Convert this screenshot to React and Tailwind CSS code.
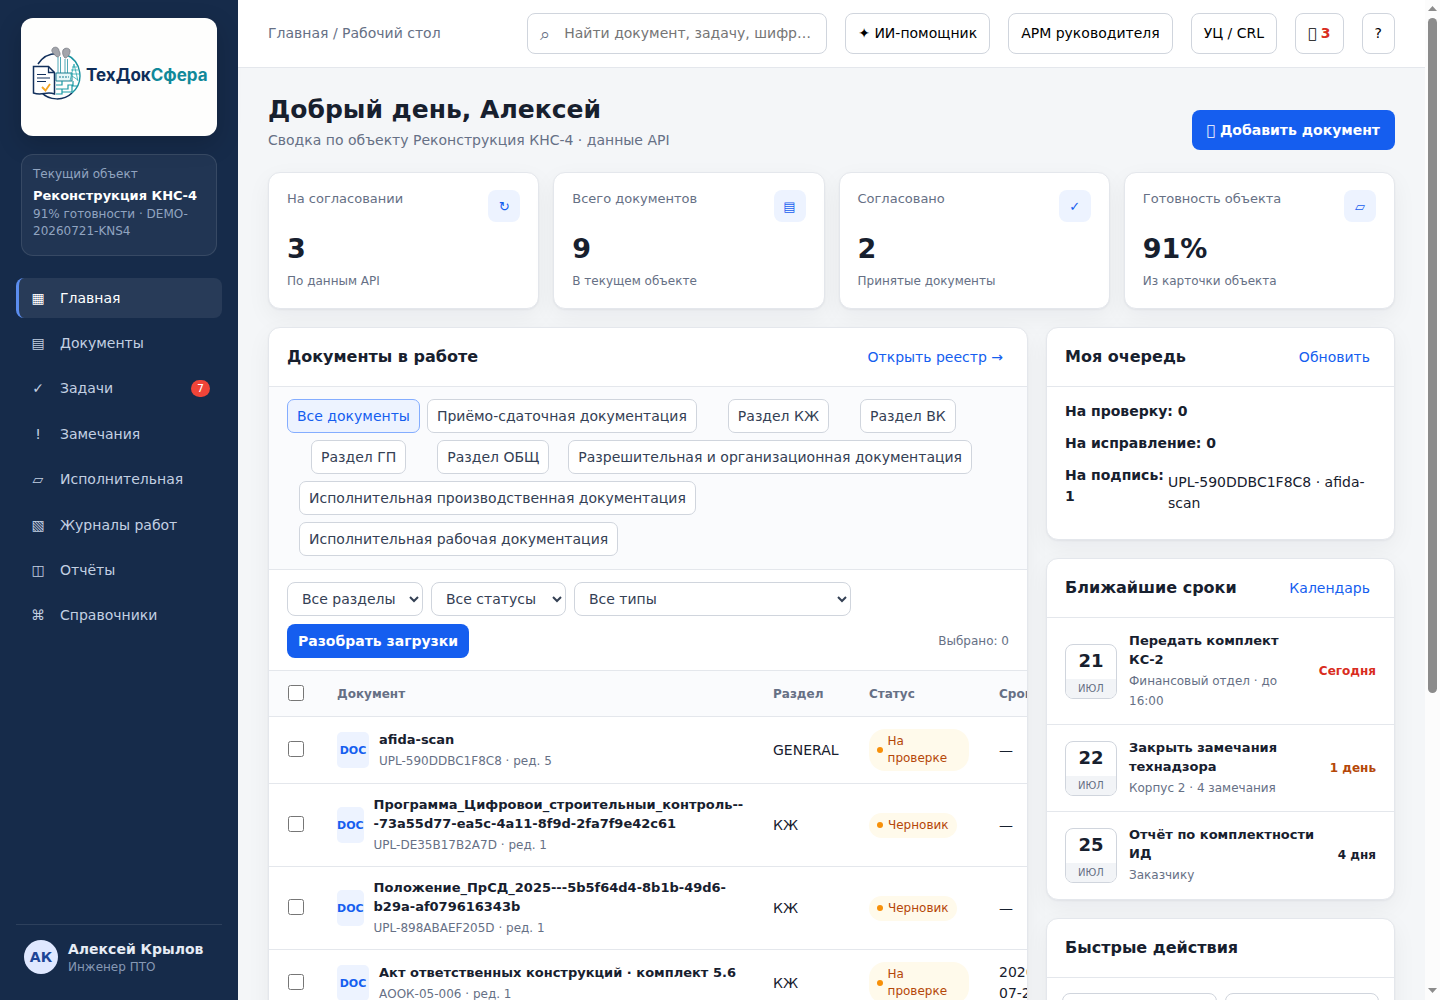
import React from 'react'

const navItems = [
  { icon: '▦', label: 'Главная', active: true },
  { icon: '▤', label: 'Документы' },
  { icon: '✓', label: 'Задачи', badge: 7 },
  { icon: '!', label: 'Замечания' },
  { icon: '▱', label: 'Исполнительная' },
  { icon: '▧', label: 'Журналы работ' },
  { icon: '◫', label: 'Отчёты' },
  { icon: '⌘', label: 'Справочники' },
]

const stats = [
  { label: 'На согласовании', icon: '↻', value: '3', note: 'По данным API' },
  { label: 'Всего документов', icon: '▤', value: '9', note: 'В текущем объекте' },
  { label: 'Согласовано', icon: '✓', value: '2', note: 'Принятые документы' },
  { label: 'Готовность объекта', icon: '▱', value: '91%', note: 'Из карточки объекта' },
]

const chips = [
  { label: 'Все документы', level: 0, active: true },
  { label: 'Приёмо-сдаточная документация', level: 0 },
  { label: 'Раздел КЖ', level: 2 },
  { label: 'Раздел ВК', level: 2 },
  { label: 'Раздел ГП', level: 2 },
  { label: 'Раздел ОБЩ', level: 2 },
  { label: 'Разрешительная и организационная документация', level: 1 },
  { label: 'Исполнительная производственная документация', level: 1 },
  { label: 'Исполнительная рабочая документация', level: 1 },
]

const chipIndent = ['', 'ml-3', 'ml-6']

const documents = [
  { name: 'afida-scan', code: 'UPL-590DDBC1F8C8 · ред. 5', section: 'GENERAL', status: 'На проверке', due: '—' },
  {
    name: 'Программа_Цифровои_строительныи_контроль---73a55d77-ea5c-4a11-8f9d-2fa7f9e42c61',
    code: 'UPL-DE35B17B2A7D · ред. 1',
    section: 'КЖ',
    status: 'Черновик',
    due: '—',
  },
  {
    name: 'Положение_ПрСД_2025---5b5f64d4-8b1b-49d6-b29a-af079616343b',
    code: 'UPL-898ABAEF205D · ред. 1',
    section: 'КЖ',
    status: 'Черновик',
    due: '—',
  },
  { name: 'Акт ответственных конструкций · комплект 5.6', code: 'АООК-05-006 · ред. 1', section: 'КЖ', status: 'На проверке', due: '2026-07-21' },
]

const deadlines = [
  { day: 21, title: 'Передать комплект КС-2', note: 'Финансовый отдел · до 16:00', left: 'Сегодня', tone: 'text-[#d92d20]' },
  { day: 22, title: 'Закрыть замечания технадзора', note: 'Корпус 2 · 4 замечания', left: '1 день', tone: 'text-[#b54708]' },
  { day: 25, title: 'Отчёт по комплектности ИД', note: 'Заказчику', left: '4 дня', tone: 'text-[#17202e]' },
]

const topButton = 'h-[41px] shrink-0 rounded-lg border border-[#d0d5dd] bg-white px-3 whitespace-nowrap text-black'
const card = 'rounded-xl border border-[#e4e7ec] bg-white shadow-[0_1px_2px_rgba(16,24,40,0.05),0_8px_24px_rgba(16,24,40,0.05)]'

const LogoMark = () => (
  <svg viewBox="0 0 50 54" className="h-[54px] w-[50px] shrink-0" fill="none" aria-hidden="true">
    <path d="M6 18A23 23 0 0 1 25 7.500" stroke="#12305c" strokeWidth="1.500" />
    <path d="M9 46C17 55 32 55 40 47" stroke="#12305c" strokeWidth="1.500" />
    <path d="M34 8.500A23 23 0 0 1 40 47" stroke="#1a93a0" strokeWidth="1.400" />
    <g fill="#a3a5ab" stroke="#777b84" strokeWidth="0.800">
      <path d="M21 2c3-2 6 0 6 3 2 3 1 5-1 6-3 0-3-3-5-4-2-2-1-4 0-5z" />
      <path d="M31 4c2-3 7-2 7 1 0 4-3 7-5 7-2-2-3-5-2-8z" />
    </g>
    <path d="M26 11v16M28.500 11v16M33 13v14M35.500 13v14" stroke="#3d9fae" strokeWidth="0.900" />
    <path d="M24 27h16v8H24z" fill="#e6f7f8" stroke="#197f91" />
    <path d="M27 31h10" stroke="#197f91" strokeWidth="1.200" strokeDasharray="2 1" />
    <path d="M30 35v4h-6M24 43h12v-4h5v-4M24 48h6v-5M30 46h10v-6h6" stroke="#1a9aa5" strokeWidth="1.200" />
    <path d="M38 35l4-17 4 17M39 24h7M38 28h9M40 21h5M40 30l6 4" stroke="#29a9b0" strokeWidth="0.800" />
    <path d="M1.500 20.500h15l6 6V48c-8-3-12 2-21-1z" fill="#fff" stroke="#12305c" strokeWidth="1.500" />
    <path d="M16.500 20.500v6h6" stroke="#12305c" strokeWidth="1.300" />
    <path d="M5 28.500h9M5 32h13M5 35.500h9" stroke="#12305c" strokeWidth="1.200" />
    <path d="M10 41l3.500 3.500L18 38" stroke="#f5a623" strokeWidth="1.800" />
  </svg>
)

const Sidebar = () => (
  <aside className="flex w-[238px] shrink-0 flex-col bg-[#162b4a] px-4 pt-[18px] pb-[25px]">
    <div className="mx-[5px] flex h-[118px] items-center rounded-xl bg-[#fefefd] pb-2 pl-[11px] shadow-[0_8px_24px_rgba(0,0,0,0.18)]">
      <LogoMark />
      <span className="mt-1 ml-1 font-['Inter',sans-serif] text-[17px] leading-6 font-bold text-[#0f2d59]">
        ТехДок<span className="text-[#11899a]">Сфера</span>
      </span>
    </div>

    <div className="mx-[5px] mt-[18px] h-[102px] rounded-xl border border-white/10 bg-white/5 px-[11px] pt-[11px] text-xs leading-[17px] text-[#91a4c0]">
      <div>Текущий объект</div>
      <div className="mt-[3px] text-[13px] leading-5 font-bold whitespace-nowrap text-white">Реконструкция КНС-4</div>
      <div>91% готовности · DEMO-20260721-KNS4</div>
    </div>

    <nav className="mt-[22px] flex h-[358px] flex-col justify-between">
      {navItems.map((item) => (
        <a
          key={item.label}
          href="#"
          className={
            item.active
              ? 'flex h-10 items-center gap-3 rounded-lg border-l-[3px] border-[#5b8def] bg-white/8 pr-3 pl-[9px] text-white'
              : 'flex h-10 items-center gap-3 rounded-lg pr-3 pl-3 text-[#c3d0e2]'
          }
        >
          <span className="w-5 text-center">{item.icon}</span>
          <span className="grow">{item.label}</span>
          {item.badge && (
            <span className="rounded-full bg-[#f04438] px-[6px] text-[11px] leading-[17px] text-white">{item.badge}</span>
          )}
        </a>
      ))}
    </nav>

    <div className="mt-auto flex items-center gap-[10px] border-t border-white/10 px-2 pt-[14px]">
      <div className="flex h-[34px] w-[34px] items-center justify-center rounded-full bg-[#dfe8ff] font-bold text-[#1d4596]">АК</div>
      <div>
        <div className="leading-5 font-bold text-[#e6ecf5]">Алексей Крылов</div>
        <div className="text-xs leading-4 text-[#8698b4]">Инженер ПТО</div>
      </div>
    </div>
  </aside>
)

const TopBar = () => (
  <header className="flex h-[68px] shrink-0 items-center gap-[18px] border-b border-[#e4e7ec] bg-white px-[30px]">
    <div className="grow text-[#667085]">Главная / Рабочий стол</div>
    <label className="flex h-[41px] w-[300px] items-center rounded-lg border border-[#d0d5dd] px-3 text-[#667085]">
      <span className="w-6 shrink-0 text-lg">⌕</span>
      <input
        type="text"
        aria-label="Поиск"
        placeholder="Найти документ, задачу, шифр…"
        className="w-full min-w-0 text-ellipsis outline-none placeholder:text-[#757575]"
      />
    </label>
    <button className={topButton}>✦ ИИ-помощник</button>
    <button className={topButton}>АРМ руководителя</button>
    <button className={topButton}>УЦ / CRL</button>
    <button className={topButton} aria-label="Уведомления">
      {'\uf0f3'} <b className="text-[#d92d20]">3</b>
    </button>
    <button className={topButton}>?</button>
  </header>
)

const PanelHeader = ({ title, action }) => (
  <div className="flex h-[59px] items-center justify-between border-b border-[#e4e7ec] pr-6 pl-[18px]">
    <h2 className="text-base leading-6 font-bold">{title}</h2>
    {action && <button className="text-[#155eef]">{action}</button>}
  </div>
)

const StatCard = ({ label, icon, value, note }) => (
  <div className={`${card} px-[18px] py-[17px]`}>
    <div className="flex items-start justify-between">
      <span className="text-[13px] leading-[18px] text-[#667085]">{label}</span>
      <span className="flex h-8 w-8 items-center justify-center rounded-lg bg-[#edf3ff] text-[13px] text-[#155eef]">{icon}</span>
    </div>
    <div className="mt-[9px] text-[27px] leading-9 font-bold">{value}</div>
    <div className="mt-1 text-xs leading-5 text-[#667085]">{note}</div>
  </div>
)

const StatusPill = ({ children }) => (
  <span className="inline-flex items-center gap-[5px] rounded-2xl bg-[#fffaeb] px-2 py-1 text-xs leading-[17px] text-[#b54708]">
    <i className="h-[6px] w-[6px] rounded-full bg-[#f79009]" />
    {children}
  </span>
)

const DocumentsPanel = () => (
  <section className={`${card} overflow-hidden`}>
    <PanelHeader title="Документы в работе" action="Открыть реестр →" />

    <div className="flex flex-wrap gap-[7px] border-b border-[#e4e7ec] bg-[#fafbfd] px-[18px] pt-3 pb-[13px]">
      {chips.map((chip) => (
        <button
          key={chip.label}
          className={`${chipIndent[chip.level]} h-[34px] rounded-[7px] border px-[9px] ${
            chip.active ? 'border-[#84adff] bg-[#edf3ff] text-[#155eef]' : 'border-[#d0d5dd] bg-white text-[#344054]'
          }`}
        >
          {chip.label}
        </button>
      ))}
    </div>

    <div className="flex flex-wrap items-center gap-2 px-[18px] py-3 text-[#344054]">
      <select aria-label="Раздел" className="h-[34px] w-[136px] rounded-lg border border-[#d0d5dd] bg-white px-[10px]">
        <option>Все разделы</option>
      </select>
      <select aria-label="Статус" className="h-[34px] w-[135px] rounded-lg border border-[#d0d5dd] bg-white px-[10px]">
        <option>Все статусы</option>
      </select>
      <select aria-label="Тип" className="mr-20 h-[34px] w-[277px] rounded-lg border border-[#d0d5dd] bg-white px-[10px]">
        <option>Все типы</option>
      </select>
      <button className="h-[34px] rounded-lg bg-[#155eef] px-[11px] font-bold text-white">Разобрать загрузки</button>
      <span className="ml-auto text-xs text-[#667085]">Выбрано: 0</span>
    </div>

    <div className="overflow-hidden">
      <table className="w-[860px] table-fixed border-collapse text-left">
        <colgroup>
          <col className="w-[53px]" />
          <col className="w-[436px]" />
          <col className="w-[96px]" />
          <col className="w-[130px]" />
          <col />
        </colgroup>
        <thead>
          <tr className="h-[46px] border-y border-[#e4e7ec] bg-[#fafbfd] text-xs text-[#667085]">
            <th className="pb-[2px] pl-[19px]">
              <input type="checkbox" aria-label="Выбрать все" className="block h-4 w-4" />
            </th>
            <th className="px-[15px]">Документ</th>
            <th className="px-[15px]">Раздел</th>
            <th className="px-[15px]">Статус</th>
            <th className="px-[15px]">Срок</th>
          </tr>
        </thead>
        <tbody>
          {documents.map((doc) => (
            <tr key={doc.code} className="border-b border-[#e4e7ec]">
              <td className="pb-[2px] pl-[19px]">
                <input type="checkbox" aria-label={doc.name} className="block h-4 w-4" />
              </td>
              <td className="py-[11px] pr-[14px] pl-[15px]">
                <div className="flex items-center gap-[10px]">
                  <span className="flex h-9 w-8 items-center justify-center rounded-[5px] bg-[#edf3ff] text-[11px] font-bold text-[#155eef]">
                    DOC
                  </span>
                  <div>
                    <div className="mb-[2px] text-[13px] leading-[19px] font-bold">{doc.name}</div>
                    <div className="text-xs leading-5 text-[#667085]">{doc.code}</div>
                  </div>
                </div>
              </td>
              <td className="px-[15px] py-3">{doc.section}</td>
              <td className="px-[15px] py-3">
                <div className="flex">
                  <StatusPill>{doc.status}</StatusPill>
                </div>
              </td>
              <td className="px-[15px]">
                <div className="w-12">{doc.due}</div>
              </td>
            </tr>
          ))}
        </tbody>
      </table>
    </div>
  </section>
)

const QueuePanel = () => (
  <section className={card}>
    <PanelHeader title="Моя очередь" action="Обновить" />
    <div className="flex flex-col gap-[11px] px-[18px] pt-[14px] pb-[18px]">
      <b>На проверку: 0</b>
      <b>На исправление: 0</b>
      <div className="flex items-start gap-1">
        <b className="w-[99px] shrink-0">На подпись: 1</b>
        <button className="py-[7px] text-left">UPL-590DDBC1F8C8 · afida-scan</button>
      </div>
    </div>
  </section>
)

const DeadlinesPanel = () => (
  <section className={card}>
    <PanelHeader title="Ближайшие сроки" action="Календарь" />
    {deadlines.map((item) => (
      <div
        key={item.day}
        className="grid grid-cols-[52px_1fr_auto] items-center gap-3 border-b border-[#e4e7ec] px-[18px] pt-[13px] pb-[13px] last:border-b-0 last:pb-[14px]"
      >
        <div className="overflow-hidden rounded-lg border border-[#d0d5dd] text-center">
          <div className="pb-[2px] text-lg leading-8 font-bold">{item.day}</div>
          <div className="bg-[#f2f4f7] text-[10px] leading-[19px] text-[#667085]">ИЮЛ</div>
        </div>
        <div>
          <div className="mb-[2px] text-[13px] leading-[19px] font-bold">{item.title}</div>
          <div className="text-xs leading-5 text-[#667085]">{item.note}</div>
        </div>
        <div className={`text-xs font-bold ${item.tone}`}>{item.left}</div>
      </div>
    ))}
  </section>
)

const QuickActions = () => (
  <section className={card}>
    <PanelHeader title="Быстрые действия" />
    <div className="grid grid-cols-2 gap-2 p-[15px]">
      <button aria-label="Загрузить" className="h-20 rounded-lg border border-[#d0d5dd]" />
      <button aria-label="Создать" className="h-20 rounded-lg border border-[#d0d5dd]" />
    </div>
  </section>
)

const ScrollRail = () => (
  <div className="flex w-[15px] shrink-0 flex-col items-center bg-[#fcfcfc]" aria-hidden="true">
    <svg viewBox="0 0 15 18" className="h-[18px] w-[15px] shrink-0" fill="#8b8b8b">
      <path d="M7.500 6L12 11H3z" />
    </svg>
    <div className="min-h-0 w-full grow">
      <div className="mx-auto h-[70%] w-[9px] rounded-full bg-[#8b8b8b]" />
    </div>
    <svg viewBox="0 0 15 18" className="h-[18px] w-[15px] shrink-0" fill="#8b8b8b">
      <path d="M7.500 11L3 6h9z" />
    </svg>
  </div>
)

const App = () => {
  return (
    <div className="flex h-screen overflow-hidden bg-[#f4f6f8] font-['DejaVu_Sans',sans-serif] text-sm leading-[21px] text-[#17202e]">
      <Sidebar />
      <div className="flex min-w-0 grow flex-col overflow-y-auto [scrollbar-width:none]">
        <TopBar />
        <main className="px-[30px] pt-6 pb-8">
          <div className="flex items-end justify-between">
            <div>
              <h1 className="text-[25px] leading-9 font-bold">Добрый день, Алексей</h1>
              <p className="mt-[2px] leading-5 text-[#667085]">Сводка по объекту Реконструкция КНС-4 · данные API</p>
            </div>
            <button className="h-10 rounded-lg bg-[#155eef] px-[15px] font-bold text-white">{'\uf067'} Добавить документ</button>
          </div>

          <div className="mt-[22px] grid grid-cols-4 gap-[14px]">
            {stats.map((stat) => (
              <StatCard key={stat.label} {...stat} />
            ))}
          </div>

          <div className="mt-[18px] grid grid-cols-[minmax(0,1fr)_349px] items-start gap-[18px]">
            <DocumentsPanel />
            <div className="flex flex-col gap-[18px]">
              <QueuePanel />
              <DeadlinesPanel />
              <QuickActions />
            </div>
          </div>
        </main>
      </div>
      <ScrollRail />
    </div>
  )
}

export default App
